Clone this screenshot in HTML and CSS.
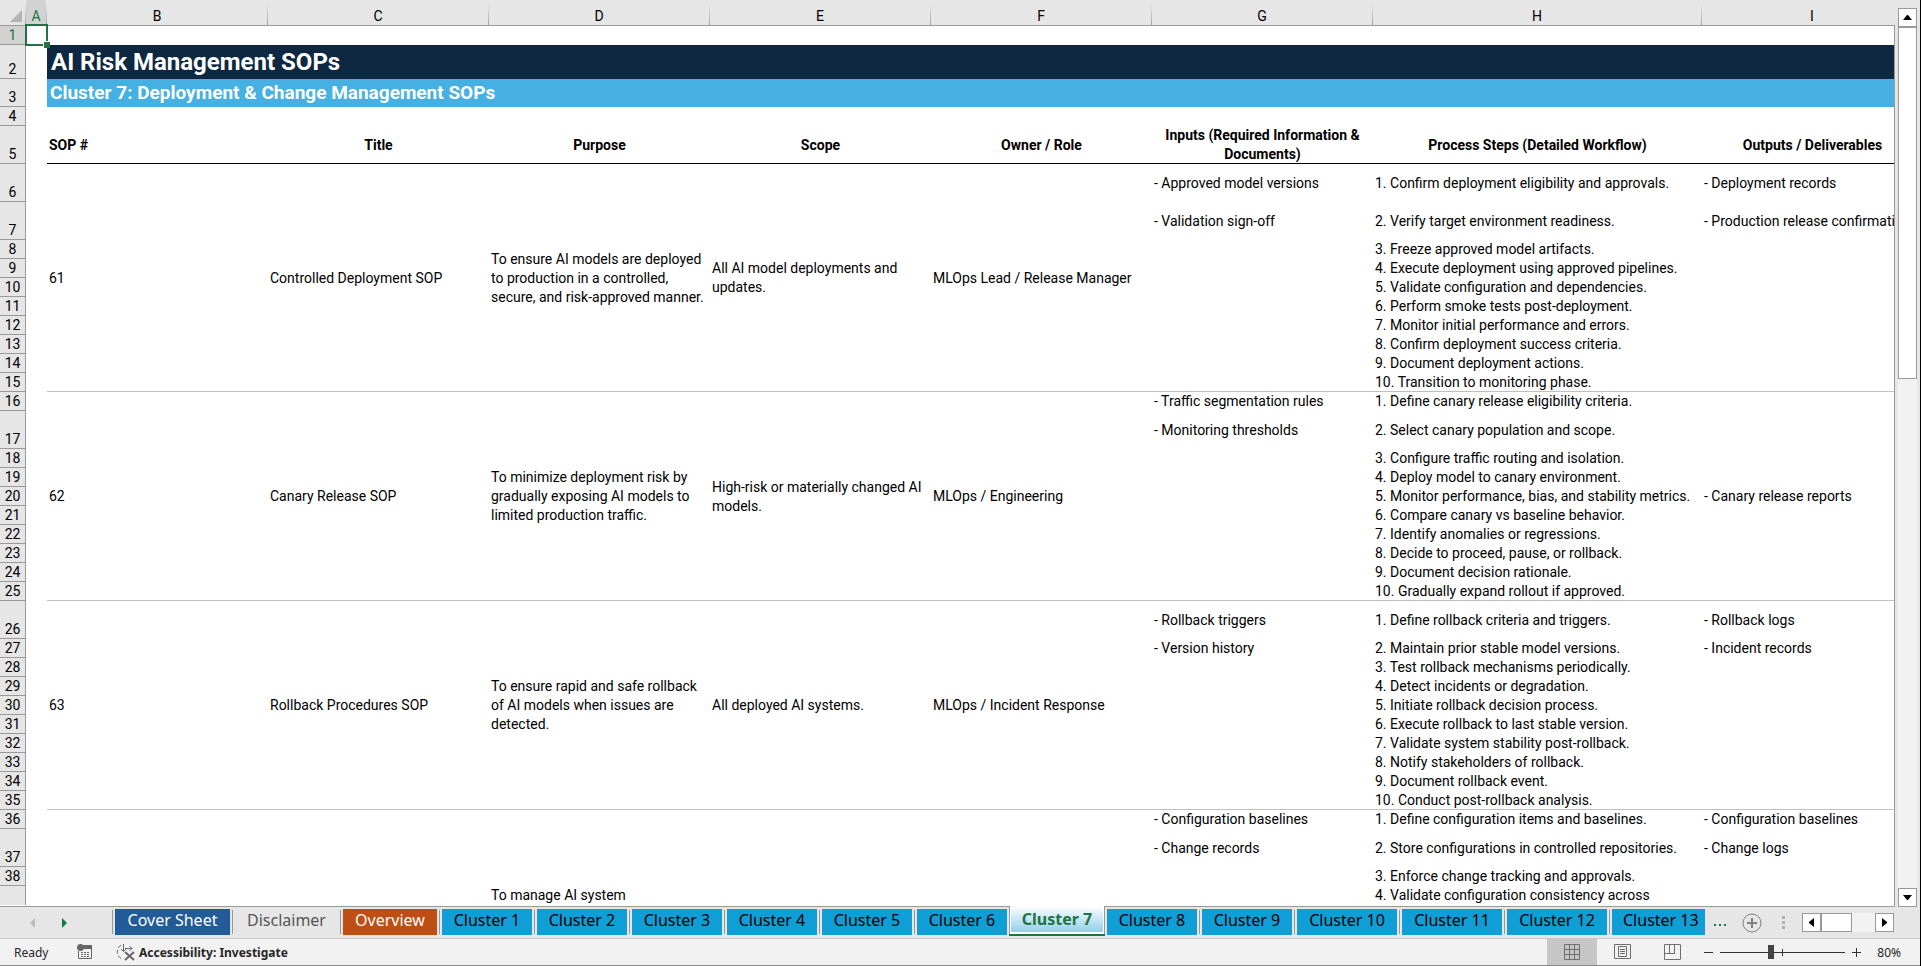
FILE: index.html
```html
<!doctype html>
<html lang="en">
  <head>
    <meta charset="utf-8">
    <title>AI Risk Management SOPs</title>
    <meta name="viewport" content="width=device-width, initial-scale=1">
    <link rel="stylesheet" href="styles.css">
  </head>
  <body>
    <main class="workbook">
      <div class="sheet">
        <table class="grid">
          <colgroup>
            <col class="col-head">
            <col class="col-a">
            <col class="col-std">
            <col class="col-std">
            <col class="col-std">
            <col class="col-std">
            <col class="col-std">
            <col class="col-std">
            <col class="col-wide">
            <col class="col-std">
          </colgroup>
          <thead>
            <tr class="letters">
              <th class="corner"><svg width="12" height="12" viewBox="0 0 12 12"><path d="M12 0V12H0Z" fill="#b4b4b4"/></svg></th>
              <th class="selected">A</th>
              <th>B</th>
              <th>C</th>
              <th>D</th>
              <th>E</th>
              <th>F</th>
              <th>G</th>
              <th>H</th>
              <th>I</th>
            </tr>
          </thead>
          <tbody>
            <tr><th class="selected">1</th><td class="active-cell"><span class="cursor"></span></td><td colspan="8"></td></tr>
            <tr class="h34"><th>2</th><td></td><td colspan="8" class="title">AI Risk Management SOPs</td></tr>
            <tr class="h28"><th>3</th><td></td><td colspan="8" class="subtitle">Cluster 7: Deployment &amp; Change Management SOPs</td></tr>
            <tr><th>4</th><td></td><td colspan="8"></td></tr>
            <tr class="h38 heading">
              <th>5</th><td></td>
              <td class="left">SOP #</td>
              <td>Title</td>
              <td>Purpose</td>
              <td>Scope</td>
              <td>Owner / Role</td>
              <td>Inputs (Required Information &amp; Documents)</td>
              <td>Process Steps (Detailed Workflow)</td>
              <td>Outputs / Deliverables</td>
            </tr>

            <!-- SOP 61 -->
            <tr class="h38">
              <th>6</th><td></td>
              <td rowspan="10" class="merged">61</td>
              <td rowspan="10" class="merged">Controlled Deployment SOP</td>
              <td rowspan="10" class="merged">To ensure AI models are deployed to production in a controlled, secure, and risk-approved manner.</td>
              <td rowspan="10" class="merged">All AI model deployments and updates.</td>
              <td rowspan="10" class="merged">MLOps Lead / Release Manager</td>
              <td>- Approved model versions</td>
              <td>1. Confirm deployment eligibility and approvals.</td>
              <td>- Deployment records</td>
            </tr>
            <tr class="h38"><th>7</th><td></td><td>- Validation sign-off</td><td>2. Verify target environment readiness.</td><td>- Production release confirmation</td></tr>
            <tr><th>8</th><td></td><td></td><td>3. Freeze approved model artifacts.</td><td></td></tr>
            <tr><th>9</th><td></td><td></td><td>4. Execute deployment using approved pipelines.</td><td></td></tr>
            <tr><th>10</th><td></td><td></td><td>5. Validate configuration and dependencies.</td><td></td></tr>
            <tr><th>11</th><td></td><td></td><td>6. Perform smoke tests post-deployment.</td><td></td></tr>
            <tr><th>12</th><td></td><td></td><td>7. Monitor initial performance and errors.</td><td></td></tr>
            <tr><th>13</th><td></td><td></td><td>8. Confirm deployment success criteria.</td><td></td></tr>
            <tr><th>14</th><td></td><td></td><td>9. Document deployment actions.</td><td></td></tr>
            <tr class="last"><th>15</th><td></td><td></td><td>10. Transition to monitoring phase.</td><td></td></tr>

            <!-- SOP 62 -->
            <tr>
              <th>16</th><td></td>
              <td rowspan="10" class="merged">62</td>
              <td rowspan="10" class="merged">Canary Release SOP</td>
              <td rowspan="10" class="merged">To minimize deployment risk by gradually exposing AI models to limited production traffic.</td>
              <td rowspan="10" class="merged">High-risk or materially changed AI models.</td>
              <td rowspan="10" class="merged">MLOps / Engineering</td>
              <td>- Traffic segmentation rules</td>
              <td>1. Define canary release eligibility criteria.</td>
              <td rowspan="10" class="merged">- Canary release reports</td>
            </tr>
            <tr class="h38"><th>17</th><td></td><td>- Monitoring thresholds</td><td>2. Select canary population and scope.</td></tr>
            <tr><th>18</th><td></td><td></td><td>3. Configure traffic routing and isolation.</td></tr>
            <tr><th>19</th><td></td><td></td><td>4. Deploy model to canary environment.</td></tr>
            <tr><th>20</th><td></td><td></td><td>5. Monitor performance, bias, and stability metrics.</td></tr>
            <tr><th>21</th><td></td><td></td><td>6. Compare canary vs baseline behavior.</td></tr>
            <tr><th>22</th><td></td><td></td><td>7. Identify anomalies or regressions.</td></tr>
            <tr><th>23</th><td></td><td></td><td>8. Decide to proceed, pause, or rollback.</td></tr>
            <tr><th>24</th><td></td><td></td><td>9. Document decision rationale.</td></tr>
            <tr class="last"><th>25</th><td></td><td></td><td>10. Gradually expand rollout if approved.</td></tr>

            <!-- SOP 63 -->
            <tr class="h38">
              <th>26</th><td></td>
              <td rowspan="10" class="merged">63</td>
              <td rowspan="10" class="merged">Rollback Procedures SOP</td>
              <td rowspan="10" class="merged">To ensure rapid and safe rollback of AI models when issues are detected.</td>
              <td rowspan="10" class="merged">All deployed AI systems.</td>
              <td rowspan="10" class="merged">MLOps / Incident Response</td>
              <td>- Rollback triggers</td>
              <td>1. Define rollback criteria and triggers.</td>
              <td>- Rollback logs</td>
            </tr>
            <tr><th>27</th><td></td><td>- Version history</td><td>2. Maintain prior stable model versions.</td><td>- Incident records</td></tr>
            <tr><th>28</th><td></td><td></td><td>3. Test rollback mechanisms periodically.</td><td></td></tr>
            <tr><th>29</th><td></td><td></td><td>4. Detect incidents or degradation.</td><td></td></tr>
            <tr><th>30</th><td></td><td></td><td>5. Initiate rollback decision process.</td><td></td></tr>
            <tr><th>31</th><td></td><td></td><td>6. Execute rollback to last stable version.</td><td></td></tr>
            <tr><th>32</th><td></td><td></td><td>7. Validate system stability post-rollback.</td><td></td></tr>
            <tr><th>33</th><td></td><td></td><td>8. Notify stakeholders of rollback.</td><td></td></tr>
            <tr><th>34</th><td></td><td></td><td>9. Document rollback event.</td><td></td></tr>
            <tr class="last"><th>35</th><td></td><td></td><td>10. Conduct post-rollback analysis.</td><td></td></tr>

            <!-- SOP 64, scrolled partly out of view -->
            <tr>
              <th>36</th><td></td>
              <td rowspan="4"></td>
              <td rowspan="4"></td>
              <td rowspan="4" class="bottom">To manage AI system</td>
              <td rowspan="4"></td>
              <td rowspan="4"></td>
              <td>- Configuration baselines</td>
              <td>1. Define configuration items and baselines.</td>
              <td>- Configuration baselines</td>
            </tr>
            <tr class="h38"><th>37</th><td></td><td>- Change records</td><td>2. Store configurations in controlled repositories.</td><td>- Change logs</td></tr>
            <tr><th>38</th><td></td><td></td><td>3. Enforce change tracking and approvals.</td><td></td></tr>
            <tr><th class="open"></th><td></td><td></td><td>4. Validate configuration consistency across</td><td></td></tr>
          </tbody>
        </table>
      </div>
      <div class="vscroll">
        <button class="scroll-btn" aria-label="Scroll up"><svg width="9" height="5" viewBox="0 0 9 5"><path d="M4 0H5L9 5H0Z"/></svg></button>
        <div class="vthumb"></div>
        <button class="scroll-btn bottom-btn" aria-label="Scroll down"><svg width="9" height="5" viewBox="0 0 9 5"><path d="M0 0H9L5 5H4Z"/></svg></button>
      </div>
    </main>

    <nav class="tabbar">
      <div class="tab-nav">
        <button class="nav-btn off" aria-label="Previous sheets"><svg width="5" height="10" viewBox="0 0 5 10"><path d="M5 0V10L0 5Z"/></svg></button>
        <button class="nav-btn" aria-label="Next sheets"><svg width="5" height="10" viewBox="0 0 5 10"><path d="M0 0V10L5 5Z"/></svg></button>
      </div>
      <div class="tabs">
        <button class="tab cover">Cover Sheet</button>
        <button class="tab plain">Disclaimer</button>
        <button class="tab overview">Overview</button>
        <button class="tab">Cluster 1</button>
        <button class="tab">Cluster 2</button>
        <button class="tab">Cluster 3</button>
        <button class="tab">Cluster 4</button>
        <button class="tab">Cluster 5</button>
        <button class="tab">Cluster 6</button>
        <button class="tab current">Cluster 7</button>
        <button class="tab">Cluster 8</button>
        <button class="tab">Cluster 9</button>
        <button class="tab wide">Cluster 10</button>
        <button class="tab wide">Cluster 11</button>
        <button class="tab wide">Cluster 12</button>
        <button class="tab cut">Cluster 13</button>
      </div>
      <div class="tab-tools">
        <button class="more" aria-label="More sheets"><svg width="12" height="2" viewBox="0 0 12 2"><path d="M0 0h2v2H0zM5 0h2v2H5zM10 0h2v2h-2z"/></svg></button>
        <button class="add" aria-label="New sheet"><svg width="20" height="20" viewBox="0 0 20 20" fill="none" stroke="#808080"><circle cx="10" cy="10" r="9"/><path d="M10 5V15M5 10H15" stroke-width="2"/></svg></button>
        <svg class="grip" width="3" height="13" viewBox="0 0 3 13"><path d="M0 0h3v3H0zM0 5h3v3H0zM0 10h3v3H0z"/></svg>
        <div class="hscroll">
          <button class="scroll-btn" aria-label="Scroll left"><svg width="5" height="9" viewBox="0 0 5 9"><path d="M5 0V9L0 5V4Z"/></svg></button>
          <div class="hthumb"></div>
          <button class="scroll-btn right-btn" aria-label="Scroll right"><svg width="5" height="9" viewBox="0 0 5 9"><path d="M0 0V9L5 5V4Z"/></svg></button>
        </div>
      </div>
    </nav>

    <footer class="status">
      <span class="ready">Ready</span>
      <button class="macro" aria-label="Record macro">
        <svg width="16" height="16" viewBox="0 0 16 16"><path d="M6 1H15V5H6Z" fill="#666"/><path d="M1.500 7V14.500H14.500V4" fill="none" stroke="#666"/><path d="M4 8.500h2M7 8.500h2M10 8.500h2M4 10.500h2M7 10.500h2M10 10.500h2M4 12.500h2M7 12.500h2M10 12.500h2" stroke="#666"/><circle cx="3.500" cy="3.500" r="3.500" fill="#666"/></svg>
      </button>
      <button class="access">
        <svg width="20" height="18" viewBox="0 0 20 18" fill="none" stroke="#666"><path d="M5 2A8 8 0 0 0 6 16" stroke-dasharray="4 2"/><path d="M7.500 1V8M5 6l2.500 2.500L10 6M9 5.500H16M13.500 3L16 5.500L13.500 8"/><path d="M9 9l9 8M18 9l-9 8" stroke-width="2"/></svg>
        Accessibility: Investigate
      </button>
      <div class="views">
        <button class="view on" aria-label="Normal"><svg width="17" height="17" viewBox="0 0 17 17"><path d="M.5.5H15.500V15.500H.5ZM5.500 0V16M10.500 0V16M0 5.500H16M0 10.500H16"/></svg></button>
        <button class="view" aria-label="Page layout"><svg width="17" height="17" viewBox="0 0 17 17"><path d="M.5.5H16.500V14.500H.5ZM4.500 2.500H12.500V12.500H4.500ZM6 5.500h5M6 7.500h5M6 9.500h5"/></svg></button>
        <button class="view" aria-label="Page break preview"><svg width="17" height="17" viewBox="0 0 17 17"><path d="M.5.5H16.500V15.500H.5ZM0 9.500H11M5.500 0V9M10.500 0V9"/></svg></button>
      </div>
      <div class="zoom">
        <button class="step" aria-label="Zoom out"><svg width="9" height="9" viewBox="0 0 9 9"><path d="M0 4.500H9"/></svg></button>
        <input type="range" min="0" max="100" value="40" aria-label="Zoom">
        <button class="step" aria-label="Zoom in"><svg width="9" height="9" viewBox="0 0 9 9"><path d="M0 4.500H9M4.500 0V9"/></svg></button>
        <button class="percent">80%</button>
      </div>
    </footer>
  </body>
</html>
```
FILE: styles.css
```css
* {
  box-sizing: border-box;
}
body {
  display: flex;
  flex-direction: column;
  height: 100vh;
  margin: 0;
  overflow: hidden;
  background: #e6e6e6;
  border-right: 1px solid #000;
  font-family: Roboto, sans-serif;
  font-size: 14px;
  color: #000;
}
button {
  display: flex;
  align-items: center;
  justify-content: center;
  margin: 0;
  padding: 0;
  border: 0;
  background: none;
  font: inherit;
  color: inherit;
}
svg {
  display: block;
  flex: none;
}

/* sheet */
.workbook {
  display: flex;
  flex: 1;
  min-height: 0;
}
.sheet {
  position: relative;
  flex: 1;
  min-width: 0;
  overflow: hidden;
  background: #fff;
  border-bottom: 1px solid #999;
}
.sheet::after {
  content: "";
  position: absolute;
  top: 25px;
  right: 0;
  bottom: 0;
  width: 1px;
  background: #999;
}
.grid {
  width: 1923px;
  table-layout: fixed;
  border-collapse: separate;
  border-spacing: 0;
}
.col-head {
  width: 26px;
}
.col-a {
  width: 21px;
}
.col-std {
  width: 221px;
}
.col-wide {
  width: 329px;
}
.grid tr {
  height: 19px;
}
.grid .letters {
  height: 26px;
}
.grid .h28 {
  height: 28px;
}
.grid .h34 {
  height: 34px;
}
.grid .h38 {
  height: 38px;
}
.grid th {
  padding: 0;
  background: #e6e6e6;
  border-right: 1px solid #999;
  border-bottom: 1px solid #999;
  font-weight: 400;
  line-height: 18px;
  vertical-align: bottom;
  white-space: nowrap;
}
.grid .letters th {
  padding-bottom: 1px;
  border-right: 1px solid;
  border-image: linear-gradient(#e6e6e6 20%, #999) 1;
  border-bottom: 0;
  box-shadow: inset 0 -1px #999;
}
.letters svg {
  margin: 0 0 3px 10px;
}
.grid th.selected {
  background: #d2d2d2;
  color: #217346;
}
.grid th.open {
  border-bottom: 0;
}
.grid td {
  padding: 0 2px;
  line-height: 19px;
  vertical-align: middle;
}
.grid .title {
  padding-left: 4px;
  background: #0e2841;
  color: #fff;
  font-size: 24px;
  font-weight: 700;
  line-height: 28px;
}
.grid .subtitle {
  padding-left: 3px;
  background: #45b0e1;
  color: #fff;
  font-size: 19px;
  font-weight: 700;
  line-height: 24px;
}
.heading td {
  font-weight: 700;
  text-align: center;
}
.heading td.left {
  text-align: left;
}
.heading td:nth-child(n+3) {
  box-shadow: inset 0 -1px #000;
}
.grid .merged,
.last td:nth-child(n+3) {
  box-shadow: inset 0 -1px #bfbfbf;
}
.grid .bottom {
  vertical-align: bottom;
}
.grid .active-cell {
  position: relative;
}
.cursor {
  position: absolute;
  inset: -2px -1px -1px -1px;
  border: 2px solid #217346;
}
.cursor::after {
  content: "";
  position: absolute;
  right: -4px;
  bottom: -4px;
  width: 6px;
  height: 6px;
  background: #217346;
  border: 1px solid #fff;
  border-width: 1px 0 0 1px;
}

/* scroll bars */
.vscroll {
  display: flex;
  flex-direction: column;
  width: 19px;
  margin: 8px 3px 0;
  background: #f2f2f2;
}
.scroll-btn {
  flex: none;
  width: 19px;
  height: 19px;
  background: #fff;
  border: 1px solid #999;
}
.bottom-btn {
  margin-top: auto;
}
.vthumb {
  height: 352px;
  background: #fff;
  border: 1px solid #999;
}
.hscroll {
  display: flex;
  width: 92px;
  background: #f2f2f2;
}
.hthumb {
  width: 31px;
  background: #fff;
  border: 1px solid #999;
}
.right-btn {
  margin-left: auto;
}

/* sheet tabs */
.tabbar {
  display: flex;
  height: 32px;
  border-bottom: 1px solid #c6c6c6;
}
.tab-nav {
  display: flex;
  align-items: center;
  gap: 27px;
  width: 112px;
  padding-left: 30px;
}
.nav-btn {
  fill: #107c41;
}
.nav-btn.off {
  fill: #bcbcbc;
}
.tabs {
  display: flex;
  flex: none;
  font-family: "Noto Sans", sans-serif;
  font-size: 16px;
}
.tab {
  position: relative;
  height: 26px;
  min-width: 90px;
  margin: 2px 2px 0 3px;
  padding: 0 11px 5px;
  background: #0f9ed5;
}
.tab::before {
  content: "";
  position: absolute;
  top: 1px;
  left: -3px;
  width: 1px;
  height: 24px;
  background: #999;
}
.tab.cover {
  min-width: 115px;
  background: #215c98;
  color: #fff;
}
.tab.plain {
  min-width: 103px;
  background: none;
  color: #555;
}
.tab.overview {
  min-width: 94px;
  background: #bf4e14;
  color: #fff;
}
.tab.wide {
  min-width: 100px;
}
.tab.cut {
  padding-right: 6px;
}
.tab.current {
  width: 96px;
  height: 30px;
  margin: -1px -1px 0 0;
  padding: 0 2px 2px;
  background: linear-gradient(#fff, #8fd0ea) content-box, #fff;
  border: solid #217346;
  border-width: 0 0 2px;
  box-shadow: inset 1px 0 #999, inset -1px 0 #999;
  color: #217346;
  font-weight: 700;
}
.tab.current::before {
  content: none;
}
.tab-tools {
  display: flex;
  align-items: center;
  margin: 0 26px 0 auto;
}
.more {
  margin-right: 16px;
  padding-top: 4px;
  fill: #107c41;
}
.grip {
  margin: 0 17px 0 20px;
  fill: #b0b0b0;
}

/* status bar */
.status {
  display: flex;
  align-items: center;
  height: 27px;
  background: #f2f2f2;
  border-bottom: 1px solid #8c8c8c;
  font-family: "Noto Sans", sans-serif;
  font-size: 12px;
  color: #262626;
}
.ready {
  width: 77px;
  padding-left: 14px;
}
.macro {
  margin-right: 23px;
}
.access {
  gap: 3px;
  font-weight: 700;
}
.views {
  display: flex;
  align-self: stretch;
  margin-left: auto;
}
.view {
  width: 50px;
  fill: none;
  stroke: #6e6e6e;
}
.view.on {
  background: #c6c6c6;
}
.zoom {
  display: flex;
  align-items: center;
  margin: 0 19px 0 7px;
}
.step {
  stroke: #333;
}
.zoom input {
  width: 125px;
  height: 14px;
  margin: 0 7px;
  appearance: none;
  background:
    linear-gradient(#333, #333) 50% 50% / 1px 7px no-repeat,
    linear-gradient(#333, #333) 0 50% / 100% 1px no-repeat;
}
.zoom input::-webkit-slider-thumb {
  appearance: none;
  width: 6px;
  height: 14px;
  background: #444;
}
.percent {
  margin-left: 16px;
}
```
